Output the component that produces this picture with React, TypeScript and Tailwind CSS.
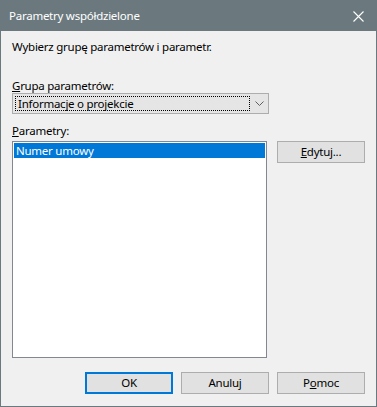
import React from "react";

const font = { fontFamily: '"Noto Sans", "Open Sans", sans-serif' };

function Btn({ children, primary }: { children: React.ReactNode; primary?: boolean }) {
  return (
    <div
      className={
        "w-[88px] h-[22px] flex items-center justify-center bg-[#e1e1e1] text-black leading-none " +
        (primary ? "border-2 border-[#0078d7]" : "border border-[#adadad]")
      }
    >
      {children}
    </div>
  );
}

export default function App() {
  return (
    <div
      className="w-[377px] h-[407px] border border-[#6b797e] bg-[#f0f0f0] flex flex-col text-[11.5px] tracking-[-0.25px] text-black"
      style={font}
    >
      <div className="h-[30px] bg-[#6b797e] flex items-center justify-between pl-[8px] pr-[12px] text-white">
        <span className="leading-none">Parametry współdzielone</span>
        <svg width="11" height="11" viewBox="0 0 11 11">
          <path d="M0.5 0.5 L10.5 10.5 M10.5 0.5 L0.5 10.5" stroke="white" strokeWidth="1.1" fill="none" />
        </svg>
      </div>
      <div className="flex flex-col pl-[11px] pr-[10px]">
        <div className="mt-[8px] h-[16px] leading-[16px]">Wybierz grupę parametrów i parametr.</div>
        <div className="mt-[23px] h-[15px] leading-[15px]">
          <span className="underline">G</span>rupa parametrów:
        </div>
        <div className="w-[257px] h-[21px] bg-[#e5e5e5] border border-[#adadad] flex items-center pl-[2px]">
          <div className="w-[235px] h-[15px] border border-dotted border-black flex items-center pl-[2px] leading-none">
            Informacje o projekcie
          </div>
          <div className="flex-1 flex items-center justify-center">
            <svg width="9" height="5" viewBox="0 0 9 5">
              <path d="M0.5 0.5 L4.5 4.5 L8.5 0.5" stroke="#5f5f5f" strokeWidth="1" fill="none" />
            </svg>
          </div>
        </div>
        <div className="mt-[9px] h-[15px] leading-[15px]">
          <span className="underline">P</span>arametry:
        </div>
        <div className="mt-[3px] flex items-start">
          <div className="w-[255px] h-[217px] bg-white border border-[#828790] p-px">
            <div className="h-[15px] bg-[#0078d7] text-white leading-[15px] pl-[2px]">Numer umowy</div>
          </div>
          <div className="ml-[10px]">
            <Btn>
              <span>
                <span className="underline">E</span>dytuj...
              </span>
            </Btn>
          </div>
        </div>
        <div className="mt-[14px] flex gap-[8px] pl-[73px]">
          <Btn primary>OK</Btn>
          <Btn>Anuluj</Btn>
          <Btn>
            <span>
              P<span className="underline">o</span>moc
            </span>
          </Btn>
        </div>
      </div>
    </div>
  );
}
